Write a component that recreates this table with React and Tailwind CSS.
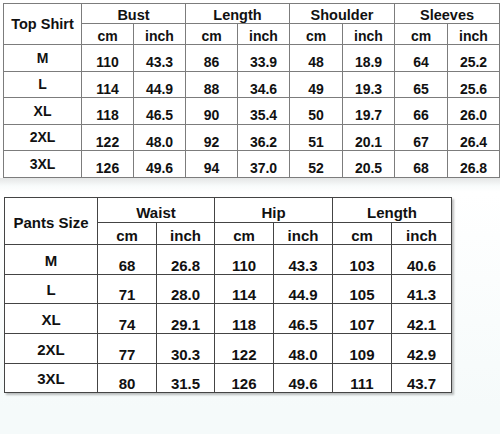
import React from "react";

const top = [
  ["M", "110", "43.3", "86", "33.9", "48", "18.9", "64", "25.2"],
  ["L", "114", "44.9", "88", "34.6", "49", "19.3", "65", "25.6"],
  ["XL", "118", "46.5", "90", "35.4", "50", "19.7", "66", "26.0"],
  ["2XL", "122", "48.0", "92", "36.2", "51", "20.1", "67", "26.4"],
  ["3XL", "126", "49.6", "94", "37.0", "52", "20.5", "68", "26.8"],
];

const pants = [
  ["M", "68", "26.8", "110", "43.3", "103", "40.6"],
  ["L", "71", "28.0", "114", "44.9", "105", "41.3"],
  ["XL", "74", "29.1", "118", "46.5", "107", "42.1"],
  ["2XL", "77", "30.3", "122", "48.0", "109", "42.9"],
  ["3XL", "80", "31.5", "126", "49.6", "111", "43.7"],
];

const font = { fontFamily: '"Liberation Sans", Arial, sans-serif' };

export default function App() {
  return (
    <div className="w-[500px] h-[434px] bg-white overflow-hidden text-[#111] font-bold" style={font}>
      <div className="pt-[3px] pl-[3px]">
        <div className="grid w-[497px] bg-[#7c7c7c] p-px gap-px grid-cols-[77px_51px_51px_51px_51px_52px_51px_52px_51px] grid-rows-[19px_20px_26px_25px_26px_25px_26px] text-[14px] leading-none">
          <div className="row-span-2 bg-white flex items-center justify-center pt-[1px] text-[14.5px]">Top Shirt</div>
          {["Bust", "Length", "Shoulder", "Sleeves"].map((h) => (
            <div key={h} className="col-span-2 bg-white flex items-center justify-center pt-[4px] text-[14.5px]">{h}</div>
          ))}
          {[0, 1, 2, 3].map((i) => (
            <React.Fragment key={i}>
              <div className="bg-white flex items-center justify-center pt-[4px]">cm</div>
              <div className="bg-white flex items-center justify-center pt-[4px]">inch</div>
            </React.Fragment>
          ))}
          {top.map((r) =>
            r.map((c, j) => (
              <div
                key={r[0] + j}
                className={
                  j === 0
                    ? "bg-white flex items-center justify-center pb-[1px]"
                    : "bg-white flex items-center justify-center pt-[8px]"
                }
              >
                {c}
              </div>
            ))
          )}
        </div>
      </div>
      <div className="h-[256px] bg-[linear-gradient(#e4e6e6,#f8fbfb_8px,#ffffff_14px,#f5fafa_230px)] pt-[19px] pl-[4px]">
        <div className="grid w-[448px] bg-[#444] p-px gap-px grid-cols-[92px_58px_57px_58px_58px_58px_59px] grid-rows-[24px_21px_29px_28px_29px_29px_28px] text-[15px] leading-none shadow-[2px_2px_2px_rgba(0,0,0,0.25)]">
          <div className="row-span-2 bg-white flex items-center justify-center pt-[3px]">Pants Size</div>
          {["Waist", "Hip", "Length"].map((h) => (
            <div key={h} className="col-span-2 bg-white flex items-center justify-center pt-[5px]">{h}</div>
          ))}
          {[0, 1, 2].map((i) => (
            <React.Fragment key={i}>
              <div className="bg-white flex items-center justify-center pt-[4px]">cm</div>
              <div className="bg-white flex items-center justify-center pt-[4px]">inch</div>
            </React.Fragment>
          ))}
          {pants.map((r) =>
            r.map((c, j) => (
              <div
                key={r[0] + j}
                className={
                  j === 0
                    ? "bg-white flex items-center justify-center pt-[1px]"
                    : "bg-white flex items-center justify-center pt-[11px]"
                }
              >
                {c}
              </div>
            ))
          )}
        </div>
      </div>
    </div>
  );
}
